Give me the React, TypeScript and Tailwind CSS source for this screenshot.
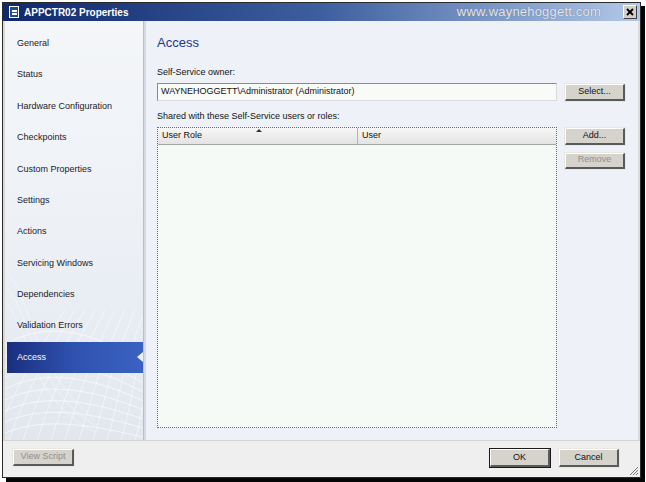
import React from "react";

const navItems = [
  "General",
  "Status",
  "Hardware Configuration",
  "Checkpoints",
  "Custom Properties",
  "Settings",
  "Actions",
  "Servicing Windows",
  "Dependencies",
  "Validation Errors",
  "Access",
];

function ClassicButton({
  label,
  disabled,
  isDefault,
  className = "",
}: {
  label: string;
  disabled?: boolean;
  isDefault?: boolean;
  className?: string;
}) {
  return (
    <div
      className={`flex items-center justify-center bg-[#d6d3cc] text-[9px] ${
        isDefault ? "border border-[#1a1a1a]" : "border border-[#e9e7e2]"
      } ${disabled ? "text-[#8f8f8f]" : "text-[#111]"} ${className}`}
    >
      <div className="flex h-full w-full items-center justify-center border-r-2 border-b-2 border-r-[#5a5a5a] border-b-[#5a5a5a] border-t border-l border-t-white border-l-white">
        {label}
      </div>
    </div>
  );
}

function Wireframe() {
  return (
    <svg
      className="pointer-events-none absolute bottom-0 left-0"
      width="138"
      height="190"
      viewBox="0 0 138 190"
      fill="none"
    >
      {[0, 1, 2, 3, 4, 5, 6, 7, 8].map((i) => (
        <path
          key={`a${i}`}
          d={`M0 ${95 + i * 11} C 40 ${70 + i * 12}, 90 ${80 + i * 12}, 138 ${115 + i * 9}`}
          stroke="#ffffff"
          strokeWidth="0.8"
          opacity="0.75"
        />
      ))}
      {[0, 1, 2, 3, 4, 5, 6, 7, 8, 9, 10, 11].map((i) => (
        <path
          key={`b${i}`}
          d={`M${i * 14 - 10} 190 C ${i * 14} 160, ${i * 12 + 20} 120, ${i * 10 + 60} 60`}
          stroke="#ffffff"
          strokeWidth="0.8"
          opacity="0.6"
        />
      ))}
      {[0, 1, 2].map((i) => (
        <path
          key={`c${i}`}
          d={`M0 ${20 + i * 16} C 30 ${50 + i * 18}, 20 ${110 + i * 18}, 90 ${170 + i * 6}`}
          stroke="#ffffff"
          strokeWidth="0.7"
          opacity="0.5"
        />
      ))}
    </svg>
  );
}

export default function App() {
  return (
    <div className="h-[482px] w-[646px] bg-white pt-[2px] pl-[2px] font-['Liberation_Sans',Arial,sans-serif]">
      <div className="flex h-[476px] w-[639px] flex-col border border-[#2a2a2a] bg-[#d9d9d9] shadow-[4px_4px_0_#050505]">
        {/* title bar */}
        <div className="flex h-[18px] items-center bg-gradient-to-r from-[#10286e] via-[#3e5f9e] to-[#b3c9e9] pl-[6px] pr-[3px]">
          <div className="flex h-[12px] w-[10px] flex-col items-center justify-center gap-[1px] border border-white bg-[#2a4a8a]">
            <div className="h-[2px] w-[5px] bg-white" />
            <div className="h-[2px] w-[5px] bg-white" />
          </div>
          <div className="ml-[5px] text-[10px] font-bold text-white">APPCTR02 Properties</div>
          <div className="ml-auto mr-[22px] text-[13px] tracking-[0.2px] text-[#e4e8ee] [text-shadow:0_0_1px_#5a6a80]">
            www.waynehoggett.com
          </div>
          <div className="flex h-[14px] w-[14px] items-center justify-center border border-t-white border-l-white border-r-[#404040] border-b-[#404040] bg-[#d4d0c8]">
            <svg width="8" height="8" viewBox="0 0 8 8">
              <path d="M1 1 L7 7 M7 1 L1 7" stroke="#000" strokeWidth="1.8" />
            </svg>
          </div>
        </div>

        {/* body */}
        <div className="flex h-[419px]">
          <div className="w-[2px] bg-[#d8d8d8]" />
          {/* sidebar */}
          <div className="relative w-[138px] overflow-hidden bg-gradient-to-b from-[#f4f6f9] via-[#edf1f6] to-[#e2e7ee] pt-[7px]">
            <Wireframe />
            {navItems.map((item) => {
              const active = item === "Access";
              return (
                <div
                  key={item}
                  className={`relative flex h-[31.4px] items-center text-[9px] ${
                    active
                      ? "ml-[2px] bg-gradient-to-r from-[#1b2e7e] via-[#2f52b0] to-[#3a62c2] pl-[10px] text-white"
                      : "pl-[12px] text-[#1a1a2a]"
                  }`}
                >
                  {item}
                  {active && (
                    <div className="absolute right-0 top-[10px] h-0 w-0 border-y-[5px] border-r-[6px] border-y-transparent border-r-[#eef1f7]" />
                  )}
                </div>
              );
            })}
          </div>
          <div className="w-[3px] border-l border-[#b9bfc8] bg-[#d6dbe2]" />

          {/* content */}
          <div className="flex flex-1 flex-col border-r-2 border-[#dcdcdc] bg-[#eef1f7] pl-[11px] pr-[12px]">
            <div className="mt-[12px] text-[13px] text-[#22388e]">Access</div>
            <div className="mt-[13px] text-[9px] text-[#111]">Self-Service owner:</div>
            <div className="mt-[4px] flex items-start gap-[7px]">
              <div className="flex h-[18px] w-[400px] items-center border border-t-[#8a8a8a] border-l-[#8a8a8a] border-r-[#d9d9d9] border-b-[#d9d9d9] bg-[#f8fbf8] pl-[3px] text-[9px] text-[#111]">
                WAYNEHOGGETT\Administrator (Administrator)
              </div>
              <ClassicButton label="Select..." className="h-[19px] w-[62px]" />
            </div>
            <div className="mt-[8px] text-[9px] text-[#111]">Shared with these Self-Service users or roles:</div>
            <div className="mt-[3px] flex items-start gap-[7px]">
              <div className="flex h-[301px] w-[400px] flex-col border border-dotted border-[#5c6c80] bg-[#f6faf7]">
                <div className="relative flex h-[17px] border-b border-[#a6a6a6] bg-gradient-to-b from-[#f7f7f7] to-[#e3e3e3] text-[9px] text-[#111]">
                  <div className="flex w-[200px] items-center border-r border-[#b5b5b5] pl-[4px]">User Role</div>
                  <div className="flex flex-1 items-center pl-[4px]">User</div>
                  <div className="absolute left-[98px] top-[1px] h-0 w-0 border-x-[3px] border-b-[3px] border-x-transparent border-b-[#333]" />
                </div>
              </div>
              <div className="flex flex-col gap-[6px]">
                <ClassicButton label="Add..." className="h-[19px] w-[62px]" />
                <ClassicButton label="Remove" disabled className="h-[18px] w-[62px]" />
              </div>
            </div>
          </div>
        </div>

        {/* footer */}
        <div className="relative flex flex-1 items-start border-t border-[#d4d4d4] bg-[#efefef] px-[9px] pt-[7px]">
          <ClassicButton label="View Script" disabled className="h-[19px] w-[63px]" />
          <div className="ml-auto mr-[11px] flex gap-[7px]">
            <ClassicButton label="OK" isDefault className="h-[20px] w-[62px]" />
            <ClassicButton label="Cancel" className="h-[20px] w-[62px]" />
          </div>
          <svg className="absolute bottom-[1px] right-[1px]" width="11" height="11" viewBox="0 0 11 11">
            <path d="M10 2 L2 10 M10 5 L5 10 M10 8 L8 10" stroke="#7a7a7a" strokeWidth="1" />
          </svg>
        </div>
      </div>
    </div>
  );
}
